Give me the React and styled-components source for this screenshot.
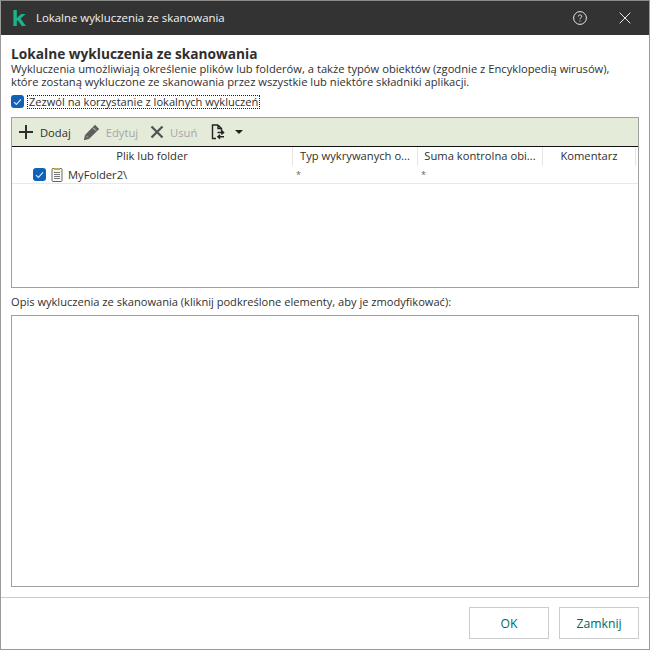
import React from "react";
import styled, { createGlobalStyle } from "styled-components";

const GlobalStyle = createGlobalStyle`
	html, body {
		margin: 0;
		padding: 0;
		background: #fff;
	}
	* {
		box-sizing: border-box;
	}
`;

function Check() {
	return (
		<CheckBox>
			<svg width="9" height="8" viewBox="0 0 9 8" fill="none">
				<path d="M1 4.2 L3.4 6.4 L8 1.4" stroke="#dfeaf7" strokeWidth="1.1" />
			</svg>
		</CheckBox>
	);
}

const columns = [
	{ title: "Plik lub folder", width: 281 },
	{ title: "Typ wykrywanych o...", width: 125 },
	{ title: "Suma kontrolna obi...", width: 125 },
	{ title: "Komentarz", width: 93 },
];

function App() {
	return (
		<Window>
			<GlobalStyle />
			<TitleBar>
				<svg width="13" height="16" viewBox="0 0 13 16">
					<path d="M0.4 0 H3.8 V16 H0.4 Z M3.8 8 L8.2 4 H12.6 L7.6 8.4 L12.9 16 H8.7 L4.8 10.2 L3.8 11 Z" fill="#1bb28e" />
				</svg>
				<WindowTitle>Lokalne wykluczenia ze skanowania</WindowTitle>
				<HelpButton>
					<svg width="16" height="16" viewBox="0 0 16 16" fill="none">
						<circle cx="8" cy="8" r="6.4" stroke="#e8e8e8" strokeWidth="1" />
						<path d="M6.3 6.5 C6.3 4.4 9.8 4.4 9.8 6.4 C9.8 7.7 8 7.6 8 9.2" stroke="#e8e8e8" strokeWidth="1" />
						<path d="M7.5 10.6 H8.5 V11.6 H7.5 Z" fill="#e8e8e8" />
					</svg>
				</HelpButton>
				<CloseButton>
					<svg width="12" height="12" viewBox="0 0 12 12" fill="none">
						<path d="M0.7 0.7 L11.3 11.3 M11.3 0.7 L0.7 11.3" stroke="#e8e8e8" strokeWidth="1" />
					</svg>
				</CloseButton>
			</TitleBar>
			<Content>
				<Heading>Lokalne wykluczenia ze skanowania</Heading>
				<Description>
					Wykluczenia umożliwiają określenie plików lub folderów, a także typów obiektów (zgodnie z Encyklopedią wirusów),
					<br />
					które zostaną wykluczone ze skanowania przez wszystkie lub niektóre składniki aplikacji.
				</Description>
				<AllowRow>
					<Check />
					<AllowLabel>Zezwól na korzystanie z lokalnych wykluczeń</AllowLabel>
				</AllowRow>
				<TablePanel>
					<Toolbar>
						<ToolButton>
							<svg width="16" height="16" viewBox="0 0 16 16">
								<path d="M7 1 H9 V7 H15 V9 H9 V15 H7 V9 H1 V7 H7 Z" fill="#2e2e2e" />
							</svg>
							<ToolLabel>Dodaj</ToolLabel>
						</ToolButton>
						<ToolButton>
							<svg width="17" height="17" viewBox="0 0 17 17">
								<path d="M12 0.8 L16.2 5 L6 15 L0.8 16.2 L2 11 Z" fill="#5e5e5e" />
								<path d="M10 3.6 L13 6.6" stroke="#e4ecd9" strokeWidth="0.9" />
								<path d="M3 11.6 L5.2 13.8" stroke="#b9bdb0" strokeWidth="0.9" />
							</svg>
							<ToolLabel $disabled>Edytuj</ToolLabel>
						</ToolButton>
						<ToolButton>
							<svg width="14" height="14" viewBox="0 0 14 14" fill="none">
								<path d="M1.5 1.5 L12.5 12.5 M12.5 1.5 L1.5 12.5" stroke="#555" strokeWidth="2.4" />
							</svg>
							<ToolLabel $disabled>Usuń</ToolLabel>
						</ToolButton>
						<ImportButton>
							<svg width="14" height="16" viewBox="0 0 14 16" fill="none">
								<path d="M7 1 H1.5 V14.5 H5 M7 1 L10.5 4.5 V7 M7 1 V4.5 H10.5" stroke="#222" strokeWidth="1.4" />
								<path d="M6.5 8.5 H12.5 M10.4 6.6 L12.6 8.5 L10.4 10.4 M13 12.8 H7 M9.1 10.9 L6.9 12.8 L9.1 14.7" stroke="#222" strokeWidth="1.4" />
							</svg>
							<Caret />
						</ImportButton>
					</Toolbar>
					<HeaderRow>
						{columns.map((col) => (
							<HeaderCell key={col.title} $width={col.width}>
								{col.title}
							</HeaderCell>
						))}
					</HeaderRow>
					<DataRow>
						<NameCell>
							<Check />
							<svg width="12" height="15" viewBox="0 0 12 15" fill="none">
								<rect x="1" y="1.5" width="10" height="13" rx="1" fill="#fbfbf4" stroke="#666" />
								<path d="M3 1 H9 V3 H3 Z" fill="#c9a850" />
								<path d="M3 5.5 H9 M3 7.5 H9 M3 9.5 H9 M3 11.5 H9" stroke="#777" />
							</svg>
							<span>MyFolder2\</span>
						</NameCell>
						<ValueCell $width={125}>*</ValueCell>
						<ValueCell $width={125}>*</ValueCell>
					</DataRow>
				</TablePanel>
				<DetailsLabel>Opis wykluczenia ze skanowania (kliknij podkreślone elementy, aby je zmodyfikować):</DetailsLabel>
				<DetailsBox />
			</Content>
			<Footer>
				<FooterButton>OK</FooterButton>
				<FooterButton>Zamknij</FooterButton>
			</Footer>
		</Window>
	);
}

export default App;

const Window = styled.div`
	width: 650px;
	height: 650px;
	border: 1px solid #9a9a9a;
	border-top-color: #8a8a8a;
	display: flex;
	flex-direction: column;
	background: #fff;
	color: #2f2f2f;
	font-family: "Open Sans", "Noto Sans", sans-serif;
	font-size: 11.2px;
`;

const TitleBar = styled.div`
	height: 34px;
	flex: none;
	background: #333;
	display: flex;
	align-items: center;
	padding-left: 12px;
	color: #f2f2f2;
`;

const WindowTitle = styled.div`
	margin-left: 10px;
	padding-bottom: 2px;
	flex: 1;
	font-size: 11.4px;
`;

const HelpButton = styled.div`
	width: 16px;
	height: 16px;
	display: flex;
	margin-right: 31px;
`;

const CloseButton = styled.div`
	width: 12px;
	height: 12px;
	display: flex;
	margin-right: 18px;
`;

const Content = styled.div`
	flex: 1;
	display: flex;
	flex-direction: column;
	padding: 11px 10px 10px;
	min-height: 0;
`;

const Heading = styled.div`
	font-size: 13.7px;
	font-weight: 700;
	line-height: 16px;
`;

const Description = styled.div`
	line-height: 13px;
`;

const AllowRow = styled.div`
	display: flex;
	align-items: center;
	gap: 4px;
	margin-top: 7px;
	height: 13px;
`;

const CheckBox = styled.span`
	width: 13px;
	height: 13px;
	flex: none;
	border-radius: 3px;
	background: #0f62b8;
	display: inline-flex;
	align-items: center;
	justify-content: center;
`;

const AllowLabel = styled.span`
	outline: 1px dotted #222;
	line-height: 12px;
	font-size: 11.1px;
	padding: 0 1px;
`;

const TablePanel = styled.div`
	margin-top: 9px;
	height: 171px;
	flex: none;
	border: 1px solid #a0a0a0;
`;

const Toolbar = styled.div`
	height: 29px;
	background: #e4ecd9;
	border-bottom: 1px solid #111;
	display: flex;
	align-items: center;
	padding-left: 6px;
	gap: 12px;
`;

const ToolButton = styled.div`
	display: flex;
	align-items: center;
	gap: 6px;
`;

const ToolLabel = styled.span`
	color: ${(props) => (props.$disabled ? "#a8a4ac" : "#2f2f2f")};
`;

const ImportButton = styled.div`
	display: flex;
	align-items: center;
	gap: 10px;
	margin-left: 2px;
`;

const Caret = styled.span`
	width: 0;
	height: 0;
	border-left: 4px solid transparent;
	border-right: 4px solid transparent;
	border-top: 4px solid #222;
`;

const HeaderRow = styled.div`
	display: flex;
	height: 19px;
`;

const HeaderCell = styled.div`
	width: ${(props) => props.$width}px;
	flex: none;
	text-align: center;
	line-height: 18px;
	border-right: 1px solid #e6e6e6;
	white-space: nowrap;
	overflow: hidden;
`;

const DataRow = styled.div`
	display: flex;
	height: 18px;
	align-items: center;
	border-bottom: 1px solid #e8e8e8;
`;

const NameCell = styled.div`
	width: 281px;
	flex: none;
	display: flex;
	align-items: center;
	padding-left: 21px;
	gap: 5px;
`;

const ValueCell = styled.div`
	width: ${(props) => props.$width}px;
	flex: none;
	padding-left: 3px;
	font-size: 9px;
	color: #666;
`;

const DetailsLabel = styled.div`
	margin-top: 6px;
	line-height: 15px;
	font-size: 11.1px;
`;

const DetailsBox = styled.div`
	margin-top: 6px;
	height: 272px;
	flex: none;
	border: 1px solid #a0a0a0;
`;

const Footer = styled.div`
	height: 52px;
	flex: none;
	border-top: 1px solid #ccc;
	display: flex;
	justify-content: flex-end;
	align-items: flex-start;
	gap: 10px;
	padding: 9px 10px 0 0;
`;

const FooterButton = styled.div`
	width: 80px;
	height: 32px;
	border: 1px solid #ccc;
	color: #00695f;
	font-size: 12.2px;
	display: flex;
	align-items: center;
	justify-content: center;
`;
